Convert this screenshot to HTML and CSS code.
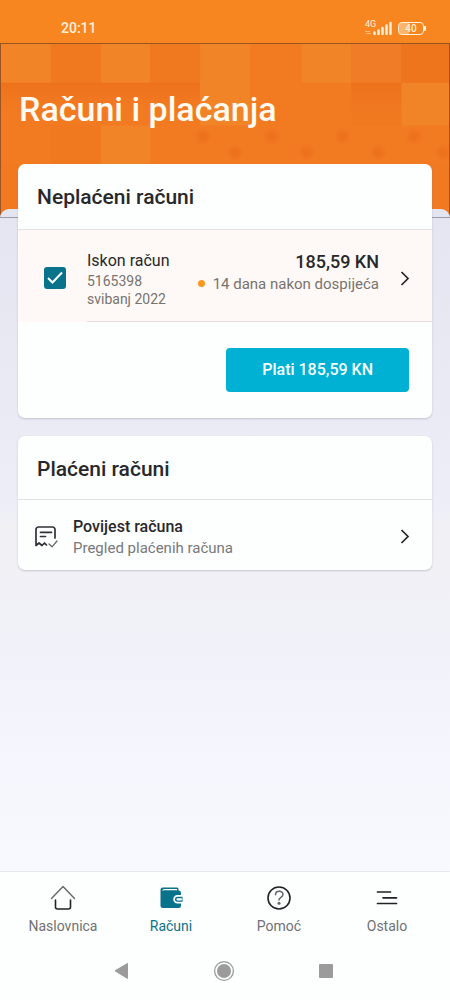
FILE: index.html
```html
<!DOCTYPE html>
<html lang="hr">
<head>
<meta charset="utf-8">
<meta name="viewport" content="width=device-width, initial-scale=1">
<title>Računi i plaćanja</title>
<link rel="stylesheet" href="styles.css">
</head>
<body>
<div class="app">
  <div class="status">
    <span class="time">20:11</span>
    <div class="indicators">
      <span class="network">4G</span>
      <svg class="signal" width="28" height="14" viewBox="0 0 28 14" aria-hidden="true">
        <path d="M0 10.5h5M1 12.5h5" stroke="#fbc48a" stroke-width=".8"/>
        <path d="M9.500 11.500v1.500M13.500 9.500v3.500M17.500 7v6M21.500 4.500v8.500M25.500 2v11" stroke="#fff1dc" stroke-width="2.400" stroke-linecap="round"/>
      </svg>
      <span class="battery">40</span>
    </div>
  </div>

  <header class="hero">
    <svg class="pattern" viewBox="0 0 450 174" preserveAspectRatio="none" aria-hidden="true">
      <defs>
        <linearGradient id="edge" x1="0" y1="0" x2="0" y2="1">
          <stop offset="0" stop-color="#e96815" stop-opacity=".5"/>
          <stop offset=".25" stop-color="#ee7420" stop-opacity="0"/>
        </linearGradient>
        <radialGradient id="dot">
          <stop offset=".3" stop-color="#e96815" stop-opacity=".5"/>
          <stop offset="1" stop-color="#e96815" stop-opacity="0"/>
        </radialGradient>
      </defs>
      <rect width="450" height="174" fill="#f27b22"/>
      <g fill="#f28428">
        <path d="M0 0h50v39H0zM100 0h50v39h-50zM200 0h50v82h-50zM302 0h50v39h-50zM402 39h48v43h-48zM100 82h50v41h-50z"/>
      </g>
      <g fill="#f07920">
        <path d="M50 0h50v39H50zM150 0h50v39h-50zM50 82h50v41H50zM352 39h50v43h-50z"/>
      </g>
      <path d="M352 0h50v39h-50z" fill="#f07c27"/>
      <path d="M402 0h48v39h-48z" fill="#ee751b"/>
      <path d="M0 39h200v43H0zM352 39h50v43h-50zM0 123h50v51H0z" fill="url(#edge)"/>
      <path d="M0 123h450v51H0z" fill="#ef7720" opacity=".5"/>
      <g fill="url(#dot)">
        <circle cx="203" cy="93" r="9"/><circle cx="272" cy="93" r="9"/><circle cx="343" cy="93" r="9"/><circle cx="415" cy="93" r="9"/>
        <circle cx="235" cy="109" r="9"/><circle cx="307" cy="109" r="9"/><circle cx="379" cy="109" r="9"/><circle cx="444" cy="109" r="9"/>
      </g>
    </svg>
    <h1>Računi i plaćanja</h1>
  </header>

  <main class="panel">
    <section class="card unpaid">
      <h2>Neplaćeni računi</h2>
      <div class="bill">
        <div class="pick">
          <input type="checkbox" id="bill" checked>
          <svg class="tick" width="22" height="22" viewBox="0 0 22 22" aria-hidden="true"><path d="M4 11l4.500 4.500L18 5.500" fill="none" stroke="#fff" stroke-width="2"/></svg>
        </div>
        <div class="details">
          <label for="bill" class="info">
            <span class="name">Iskon račun</span>
            <span class="meta">5165398</span>
            <span class="meta">svibanj 2022</span>
          </label>
          <div class="due">
            <strong>185,59 KN</strong>
            <span class="late">14 dana nakon dospijeća</span>
          </div>
          <a href="#racun" class="open" aria-label="Otvori račun"><svg width="10" height="16" viewBox="0 0 10 16"><path d="M1.500 1l6.500 6.500L1.500 14" fill="none" stroke="#242428" stroke-width="1.700"/></svg></a>
        </div>
      </div>
      <div class="actions"><button type="button">Plati 185,59 KN</button></div>
    </section>

    <section class="card paid">
      <h2>Plaćeni računi</h2>
      <a href="#povijest" class="history">
        <svg class="receipt" width="24" height="24" viewBox="0 0 24 24" fill="none" stroke="#303036" stroke-width="1.700" stroke-linecap="round" stroke-linejoin="round" aria-hidden="true">
          <path d="M21 13V4.500A2.500 2.500 0 0 0 18.500 2H4.500A2.500 2.500 0 0 0 2 4.500v16l3-2.500 3 2.500 2.500-2.500 2 2"/>
          <path d="M6.500 7.300h11M6.500 11.500h5"/>
          <path d="M15 19l3 2.800 5-5.800" stroke="#66666b" stroke-width="1.300"/>
        </svg>
        <span class="text">
          <span class="strong">Povijest računa</span>
          <span class="sub">Pregled plaćenih računa</span>
        </span>
        <span class="open"><svg width="10" height="16" viewBox="0 0 10 16" aria-hidden="true"><path d="M1.500 1l6.500 6.500L1.500 14" fill="none" stroke="#242428" stroke-width="1.700"/></svg></span>
      </a>
    </section>
  </main>

  <footer>
    <nav class="tabs">
      <a href="#naslovnica">
        <svg width="26" height="26" viewBox="0 0 26 26" fill="none" stroke-linecap="round" aria-hidden="true">
          <path d="M1.500 13.500L13 1.500l11.500 12" stroke="#66666a" stroke-width="1.400" stroke-linejoin="round"/>
          <path d="M5.500 15v7a2 2 0 0 0 2 2h11a2 2 0 0 0 2-2v-7" stroke="#222226" stroke-width="1.600"/>
        </svg>
        <span>Naslovnica</span>
      </a>
      <a href="#racuni" class="active" aria-current="page">
        <svg width="26" height="26" viewBox="0 0 26 26" aria-hidden="true">
          <path d="M5 2.500h14q1.500 0 1.500 1.500v1.500q2.500 0 2.500 2.500v12.500q0 2.500-2.500 2.500H5q-2.500 0-2.500-2.500V5Q2.500 2.500 5 2.500z" fill="#08738b"/>
          <path d="M4.500 6Q4.500 4 6 4h13v1.300H6q-1 0-1 .7z" fill="#fff"/>
          <path d="M26 10h-6.500a4.300 4.300 0 0 0 0 8.600H26z" fill="#fff"/>
          <path d="M24.500 11.800h-5a2.500 2.500 0 0 0 0 5h5z" fill="#08738b"/>
          <path d="M19.500 14.300h3.500" stroke="#fff" stroke-width="2.200" stroke-linecap="round"/>
        </svg>
        <span>Računi</span>
      </a>
      <a href="#pomoc">
        <svg width="26" height="26" viewBox="0 0 26 26" fill="none" stroke-linecap="round" aria-hidden="true">
          <circle cx="13" cy="13" r="11" stroke="#222226" stroke-width="1.600"/>
          <path d="M9.500 9.800C9.500 5.200 17 5.200 17 9.500c0 2.800-4 2.800-4 5.500" stroke="#66666a" stroke-width="1.500"/>
          <circle cx="13" cy="18.300" r="1.500" fill="#66666a"/>
        </svg>
        <span>Pomoć</span>
      </a>
      <a href="#ostalo">
        <svg width="26" height="26" viewBox="0 0 26 26" aria-hidden="true"><path d="M3.500 7h13M9 12.800h13.500M3.500 18.500h19" stroke="#222226" stroke-width="1.700" stroke-linecap="round"/></svg>
        <span>Ostalo</span>
      </a>
    </nav>
    <div class="system">
      <button type="button" aria-label="Natrag"><svg width="22" height="22" viewBox="0 0 22 22"><path d="M4 10.800L16.500 3.500v15z" fill="#9b9b9b" stroke="#9b9b9b" stroke-linejoin="round"/></svg></button>
      <button type="button" aria-label="Početni zaslon"><svg width="22" height="22" viewBox="0 0 22 22"><circle cx="11" cy="11" r="9.400" fill="none" stroke="#9b9b9b" stroke-width="1.300"/><circle cx="11" cy="11" r="7" fill="#9b9b9b"/></svg></button>
      <button type="button" aria-label="Nedavne aplikacije"><svg width="22" height="22" viewBox="0 0 22 22"><rect x="4" y="4" width="14" height="14" rx="1" fill="#9b9b9b"/></svg></button>
    </div>
  </footer>
</div>
</body>
</html>
```
FILE: styles.css
```css
* { box-sizing: border-box; }
body {
  margin: 0;
  font-family: Roboto, "Noto Sans", sans-serif;
  color: #28282c;
  background: #fdfefe;
}
svg { display: block; flex: none; }
a { color: inherit; text-decoration: none; }
button { font: inherit; border: 0; cursor: pointer; }
h1, h2 { margin: 0; font-weight: 500; }

.app { min-height: 100vh; display: flex; flex-direction: column; }

.status {
  height: 43px;
  padding: 13px 26px 0 61px;
  display: flex;
  align-items: center;
  justify-content: space-between;
  background: #f78620;
  color: #fff1dc;
}
.time { font-size: 14px; font-weight: 500; }
.indicators { display: flex; align-items: center; position: relative; }
.network { position: absolute; left: 0; top: -1px; font-size: 9px; line-height: 8px; }
.battery {
  position: relative;
  width: 26px;
  height: 13px;
  margin-left: 5px;
  border: 1px solid #fff1dc;
  border-radius: 4px;
  background: linear-gradient(90deg, #fab46b 40%, transparent 40%);
  font-size: 10px;
  line-height: 11px;
  font-weight: 500;
  text-align: center;
}
.battery::after {
  content: "";
  position: absolute;
  right: -3px;
  top: 3px;
  width: 2px;
  height: 5px;
  background: #fff1dc;
}

.hero {
  position: relative;
  height: 175px;
  padding: 45px 18px 0;
  border: 1px solid #9a5426;
  background: #f27b22;
}
.pattern { position: absolute; left: 0; top: 0; width: 100%; height: 100%; }
h1 { position: relative; font-size: 34px; line-height: 40px; color: #fffaf2; }

.panel {
  position: relative;
  flex: 1;
  display: flex;
  flex-direction: column;
  gap: 18px;
  margin-top: -9px;
  padding: 0 18px 18px;
  border-radius: 9px 9px 0 0;
  background: linear-gradient(#e3e5f0, #e8e8f3 120px, #ededf8 290px, #f0f0f4 320px, #f1f1f9 440px, #f5f5fd 540px, #f8f9fe);
}
.panel::before {
  content: "";
  position: absolute;
  left: 0;
  right: 0;
  top: 8px;
  height: 1px;
  background: #9a9cab;
}
.card {
  position: relative;
  border-radius: 7px;
  background: #fdfefe;
  box-shadow: 0 1px 2px #85889666;
  overflow: hidden;
}
.unpaid { margin-top: -45px; }
h2 {
  padding: 19px 19px 18px;
  font-size: 21px;
  line-height: 28px;
  border-bottom: 1px solid #e0e2e5;
}
.paid h2 { padding-bottom: 16px; }

.bill { display: flex; background: #fef9f6; }
.pick { position: relative; width: 69px; padding: 37px 0 0 26px; }
.pick input {
  appearance: none;
  display: block;
  width: 22px;
  height: 22px;
  margin: 0;
  border-radius: 3px;
  background: #08738b;
}
.tick { position: absolute; left: 26px; top: 37px; pointer-events: none; opacity: 0; }
.pick input:checked + .tick { opacity: 1; }
.details {
  flex: 1;
  display: flex;
  align-items: center;
  justify-content: space-between;
  padding: 20px 22px 13px 0;
  border-bottom: 1px solid #e5dddd;
}
.info { display: flex; flex-direction: column; }
.name { font-size: 16px; line-height: 22px; }
.meta { font-size: 14px; line-height: 18px; color: #77736f; }
.due {
  align-self: flex-start;
  display: flex;
  flex-direction: column;
  align-items: flex-end;
  flex: 1;
}
.due strong { font-size: 18px; line-height: 24px; font-weight: 500; }
.late { font-size: 15px; line-height: 20px; color: #77736f; }
.late::before {
  content: "";
  display: inline-block;
  width: 7px;
  height: 7px;
  margin-right: 8px;
  vertical-align: 2px;
  border-radius: 50%;
  background: #fa971e;
}
.open { margin-left: 21px; }

.actions { display: flex; justify-content: flex-end; padding: 26px 23px; }
.actions button {
  padding: 11px 36px;
  border-radius: 4px;
  background: #00b1d3;
  color: #f8ffff;
  font-size: 16px;
  line-height: 22px;
  font-weight: 500;
}

.history { display: flex; align-items: center; padding: 16px 22px 12px 16px; }
.text { flex: 1; display: flex; flex-direction: column; margin-left: 15px; }
.strong { font-size: 16px; line-height: 22px; font-weight: 500; }
.sub { font-size: 15px; line-height: 20px; color: #77797b; }

footer { border-top: 1px solid #e6e8eb; background: #fdfefe; }
.tabs { display: flex; justify-content: space-around; padding: 13px 9px 0; }
.tabs a {
  flex: 1;
  display: flex;
  flex-direction: column;
  align-items: center;
  gap: 6px;
  font-size: 14px;
  line-height: 18px;
  color: #707174;
}
.tabs .active { color: #08738b; }
.system { display: flex; justify-content: center; gap: 80px; padding: 25px 2px 18px 0; }
.system button { padding: 0; background: none; }
```
